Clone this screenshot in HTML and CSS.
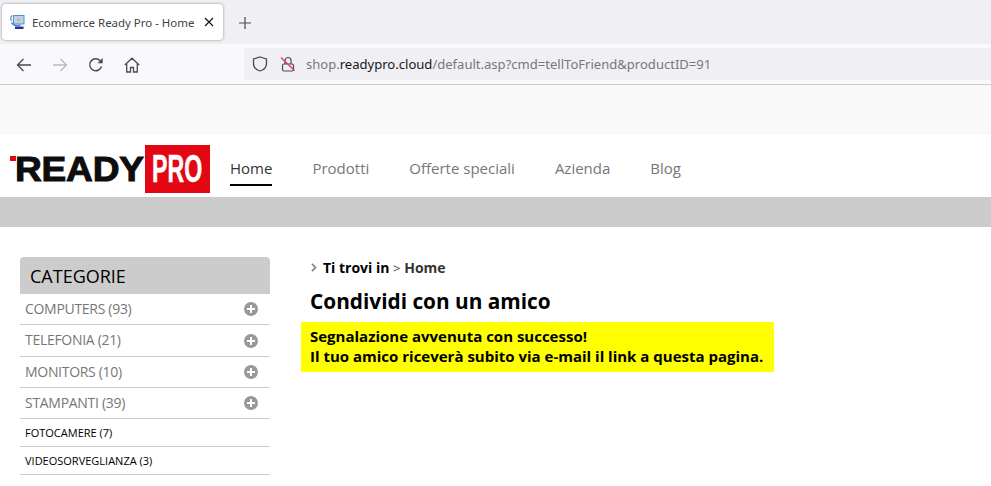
FILE: index.html
```html
<!DOCTYPE html>
<html lang="it">
<head>
<meta charset="utf-8">
<title>Ecommerce Ready Pro - Home</title>
<link rel="stylesheet" href="styles.css">
</head>
<body>
<div class="tabstrip">
  <div class="tab">
    <svg class="favicon" width="16" height="16" viewBox="0 0 16 16"><path d="M1.500 7C.5 5 .5 3 2 1.500" fill="none" stroke="#4d8cc8" stroke-width="1.200"/><rect x="3.500" y="1.500" width="10.500" height="8.500" fill="#b5d5ef" stroke="#5a8fc4"/><circle cx="8.500" cy="5.700" r="1.500" fill="#e9a27d"/><path d="M1.500 8.500c2 3 6 3.500 9 2.500" fill="none" stroke="#4d8cc8" stroke-width="1.400"/><rect x="5" y="12.500" width="8.500" height="2.500" fill="#22348c"/></svg>
    <span class="tabtitle">Ecommerce Ready Pro - Home</span>
    <svg class="tabclose" width="10" height="10" viewBox="0 0 10 10"><path d="M1 1l8 8M9 1l-8 8" stroke="#15141a" stroke-width="1.200"/></svg>
  </div>
  <svg class="newtab" width="14" height="14" viewBox="0 0 14 14"><path d="M7 1v12M1 7h12" stroke="#4a4a50" stroke-width="1.200"/></svg>
</div>
<div class="toolbar">
  <div class="navbtns">
    <svg width="16" height="16" viewBox="0 0 16 16"><path d="M15 8H1.500M7.500 2L1.500 8l6 6" fill="none" stroke="#4a4a50" stroke-width="1.300"/></svg>
    <svg width="16" height="16" viewBox="0 0 16 16"><path d="M1 8h13.500M8.500 2l6 6-6 6" fill="none" stroke="#b9b9bd" stroke-width="1.300"/></svg>
    <svg width="16" height="16" viewBox="0 0 16 16"><path d="M13.500 9.500A6 6 0 1 1 12 3.500L14 5" fill="none" stroke="#4a4a50" stroke-width="1.400"/><path d="M14.700 1v5.200H9.500z" fill="#4a4a50"/></svg>
    <svg width="16" height="16" viewBox="0 0 16 16"><path d="M.8 8L8 1.200 15.200 8M2.700 6.500V15h3.800v-4.500h3V15h3.800V6.500" fill="none" stroke="#4a4a50" stroke-width="1.300"/></svg>
  </div>
  <div class="urlbar">
    <svg width="16" height="16" viewBox="0 0 16 16"><path d="M8 1l6.500 2v4.500c0 4-3 6.500-6.500 7.500-3.500-1-6.500-3.500-6.500-7.500V3z" fill="none" stroke="#4a4a50" stroke-width="1.300"/></svg>
    <svg class="lock" width="16" height="16" viewBox="0 0 16 16"><rect x="2.500" y="8" width="11" height="7" rx="1.500" fill="none" stroke="#4a4a50" stroke-width="1.200"/><path d="M5 8V4.500a3 3 0 0 1 6 0V8" fill="none" stroke="#4a4a50" stroke-width="1.200"/><path d="M1 1.500l13.500 13" stroke="#e8305f" stroke-width="1.300"/></svg>
    <span class="url">shop.<span class="domain">readypro.cloud</span>/default.asp?cmd=tellToFriend&amp;productID=91</span>
  </div>
</div>
<div class="infobar"></div>
<header class="siteheader">
  <div class="logo">
    <span class="logodot"></span>
    <span class="ready">READY</span>
    <span class="probox"><span class="pro">PRO</span></span>
  </div>
  <nav class="mainnav">
    <a class="navitem active">Home</a>
    <a class="navitem">Prodotti</a>
    <a class="navitem">Offerte speciali</a>
    <a class="navitem">Azienda</a>
    <a class="navitem">Blog</a>
  </nav>
</header>
<div class="band"></div>
<main class="content">
  <aside class="sidebar">
    <h2 class="cattitle">CATEGORIE</h2>
    <ul class="catlist">
      <li class="cat big r1">COMPUTERS (93)<span class="plus"></span></li>
      <li class="cat big r2">TELEFONIA (21)<span class="plus"></span></li>
      <li class="cat big r3">MONITORS (10)<span class="plus"></span></li>
      <li class="cat big r3">STAMPANTI (39)<span class="plus"></span></li>
      <li class="cat small">FOTOCAMERE (7)</li>
      <li class="cat small">VIDEOSORVEGLIANZA (3)</li>
    </ul>
  </aside>
  <section class="mainpane">
    <div class="crumb"><svg class="chev" width="6" height="9" viewBox="0 0 6 9"><path d="M1 .8L4.500 4.500 1 8.200" fill="none" stroke="#888" stroke-width="1.800"/></svg><span><b class="crumbbold">Ti trovi in</b> <span class="gt">&gt;</span> <b class="crumbhome">Home</b></span></div>
    <h1 class="pagetitle">Condividi con un amico</h1>
    <div class="notice">Segnalazione avvenuta con successo!<br>Il tuo amico riceverà subito via e-mail il link a questa pagina.</div>
  </section>
</main>
</body>
</html>
```
FILE: styles.css
```css
* { box-sizing: border-box; }
html, body { margin: 0; padding: 0; height: 486px; overflow: hidden; background: #fff; }
body { font-family: "Open Sans", "Liberation Sans", sans-serif; color: #000; }

.tabstrip { height: 44px; background: #f0f0f4; display: flex; align-items: flex-start; padding: 4px 0 0 2px; }
.tab { width: 221px; height: 36px; background: #fff; border-radius: 4px; box-shadow: 0 0 3px rgba(0,0,0,.4); display: flex; align-items: center; padding-left: 8px; }
.favicon { flex: none; }
.tabtitle { font-family: "Noto Sans", sans-serif; font-size: 11.45px; color: #3f3f45; margin-left: 6px; white-space: nowrap; width: 165px; }
.tabclose { margin-left: 7px; flex: none; }
.newtab { margin: 12px 0 0 15px; }

.toolbar { height: 41px; background: #f9f9fb; border-bottom: 1px solid #ccc; display: flex; align-items: flex-start; padding: 0 0 0 16px; }
.navbtns { display: flex; gap: 20px; padding-top: 13px; width: 228px; flex: none; }
.navbtns svg { flex: none; }
.urlbar { flex: 1; height: 32px; margin-top: 4px; background: #f0f0f4; border-radius: 4px 0 0 4px; display: flex; align-items: center; padding-left: 8px; }
.lock { margin-left: 12px; }
.url { font-family: "Noto Sans", sans-serif; font-size: 13.05px; color: #77777d; margin-left: 10px; white-space: nowrap; }
.domain { color: #15141a; }

.infobar { height: 50px; background: #f9f9f9; }

.siteheader { height: 62px; background: #fff; display: flex; align-items: flex-start; }
.logo { position: relative; width: 210px; height: 58px; margin-top: 9px; flex: none; display: flex; }
.logodot { position: absolute; left: 10px; top: 12px; width: 6px; height: 5px; background: #e30613; }
.ready { position: absolute; left: 15px; top: 7px; font-family: "Liberation Sans", sans-serif; font-weight: 700; font-size: 35px; line-height: 36px; letter-spacing: -.2px; color: #0d0d0d; -webkit-text-stroke: 1px #0d0d0d; transform: scaleX(1.06); transform-origin: left center; }
.probox { position: absolute; left: 145px; top: 1px; width: 65px; height: 48px; background: #e30613; display: flex; align-items: center; justify-content: center; overflow: hidden; }
.pro { display: block; flex: none; font-family: "Liberation Sans", sans-serif; font-weight: 700; font-size: 38px; line-height: 48px; color: #fff; transform: scaleX(.61); -webkit-text-stroke: .5px #fff; }

.mainnav { display: flex; gap: 40px; margin-left: 20px; padding-top: 23px; }
.navitem { font-size: 15px; line-height: 20px; height: 28px; color: #777; white-space: nowrap; }
.navitem.active { color: #333; border-bottom: 2px solid #000; }

.band { height: 30px; background: #ccc; }

.content { display: flex; padding: 30px 0 0 20px; align-items: flex-start; }
.sidebar { width: 250px; flex: none; }
.cattitle { margin: 0; height: 37px; padding-left: 10px; background: #ccc; border-radius: 4px 4px 0 0; font-size: 18px; font-weight: 400; line-height: 38px; color: #000; }
.catlist { list-style: none; margin: 0; padding: 0; }
.cat { display: flex; justify-content: space-between; align-items: center; padding: 0 12px 0 5px; border-bottom: 1px solid #ccc; }
.big { font-size: 14px; color: #777; letter-spacing: -.3px; padding-bottom: 2px; }
.r1 { height: 31px; }
.r2 { height: 32px; }
.r3 { height: 31px; }
.small { font-size: 11px; height: 28px; color: #000; font-weight: 400; }
.plus { position: relative; width: 14px; height: 14px; margin-top: 2px; border-radius: 50%; background: #999; }
.plus::before { content: ""; position: absolute; left: 3px; top: 6px; width: 8px; height: 2px; background: #fff; }
.plus::after { content: ""; position: absolute; left: 6px; top: 3px; width: 2px; height: 8px; background: #fff; }

.mainpane { margin-left: 31px; width: 473px; }
.crumb { display: flex; align-items: center; height: 20px; font-size: 14px; padding-left: 10px; white-space: pre; }
.chev { margin-right: 6px; flex: none; }
.crumbbold { font-weight: 700; color: #000; }
.gt { color: #444; font-size: 13px; }
.crumbhome { font-weight: 700; color: #333; }
.pagetitle { margin: 10px 0 0; padding-left: 9px; font-size: 20.8px; line-height: 28px; font-weight: 700; color: #000; }
.notice { margin-top: 7px; height: 50px; padding: 5px 0 0 9px; background: #ff0; font-size: 15px; line-height: 19.5px; font-weight: 700; color: #000; white-space: nowrap; }
```
